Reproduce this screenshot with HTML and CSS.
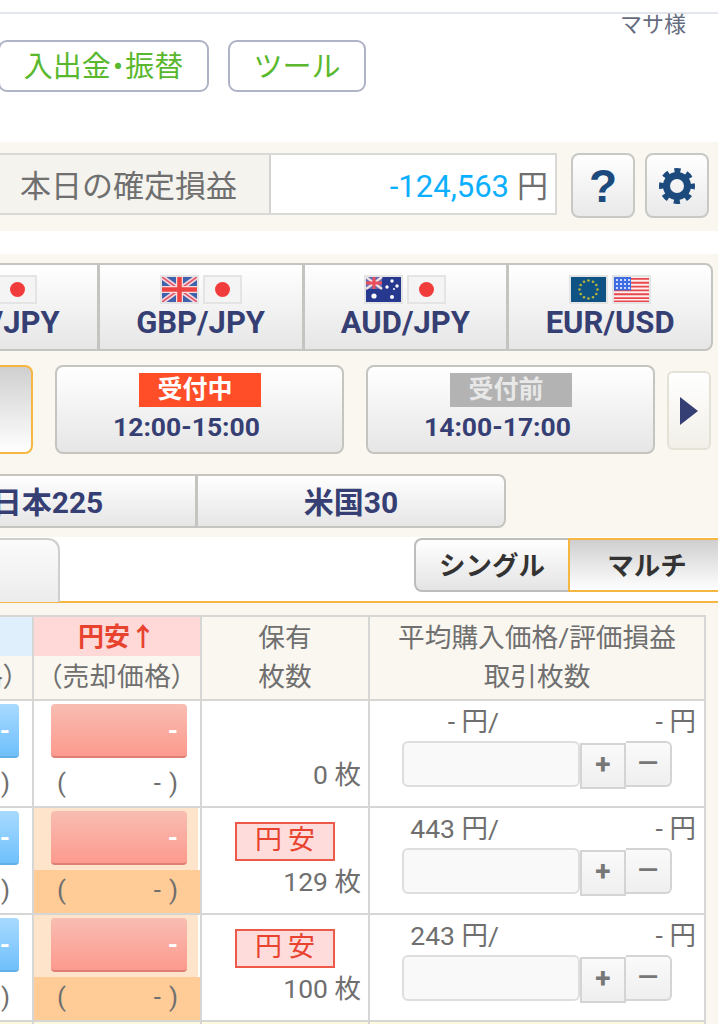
FILE: index.html
```html
<!DOCTYPE html>
<html lang="ja">
<head>
<meta charset="utf-8">
<title>取引</title>
<link rel="stylesheet" href="styles.css">
</head>
<body>
<svg class="defs" width="0" height="0" aria-hidden="true">
  <defs>
    <symbol id="f-jp" viewBox="0 0 35 25"><rect width="35" height="25" fill="#f4f4f4"/><circle cx="17.5" cy="12.5" r="7.5" fill="#f13c3c"/></symbol>
    <symbol id="f-gb" viewBox="0 0 35 25"><rect width="35" height="25" fill="#3f62ad"/><path d="M0 0L35 25M35 0L0 25" stroke="#f4d6da" stroke-width="5"/><path d="M0 0L35 25M35 0L0 25" stroke="#e2556a" stroke-width="1.6"/><path d="M17.5 0V25M0 12.5H35" stroke="#f6dcdc" stroke-width="7"/><path d="M17.5 0V25M0 12.5H35" stroke="#ef4343" stroke-width="4.5"/></symbol>
    <symbol id="f-au" viewBox="0 0 35 25"><rect width="35" height="25" fill="#26398f"/><rect width="16" height="12" fill="#5b6cb4"/><path d="M0 0L16 12M16 0L0 12" stroke="#f2dce0" stroke-width="2.4"/><path d="M8 0V12M0 6H16" stroke="#ea4e5c" stroke-width="3"/><g fill="#fff"><circle cx="8" cy="19" r="2.6"/><circle cx="26" cy="4" r="1.7"/><circle cx="21" cy="10" r="1.7"/><circle cx="31" cy="9" r="1.7"/><circle cx="26" cy="20" r="2"/><circle cx="28" cy="12" r="1"/></g></symbol>
    <symbol id="f-eu" viewBox="0 0 35 25"><rect width="35" height="25" fill="#0f5384"/><g fill="#b5b53a"><circle cx="17.5" cy="3.5" r="1.3"/><circle cx="22" cy="4.7" r="1.3"/><circle cx="25.3" cy="8" r="1.3"/><circle cx="26.5" cy="12.5" r="1.3"/><circle cx="25.3" cy="17" r="1.3"/><circle cx="22" cy="20.3" r="1.3"/><circle cx="17.5" cy="21.5" r="1.3"/><circle cx="13" cy="20.3" r="1.3"/><circle cx="9.7" cy="17" r="1.3"/><circle cx="8.5" cy="12.5" r="1.3"/><circle cx="9.7" cy="8" r="1.3"/><circle cx="13" cy="4.7" r="1.3"/></g></symbol>
    <symbol id="f-us" viewBox="0 0 35 25"><rect width="35" height="25" fill="#fbeeee"/><path d="M0 1.9H35M0 5.8H35M0 9.6H35M0 13.4H35M0 17.3H35M0 21.1H35M0 24.5H35" stroke="#e8484c" stroke-width="1.9"/><rect width="17" height="13.4" fill="#3f6ce0"/><g fill="#fff"><circle cx="3" cy="3" r="1"/><circle cx="7" cy="3" r="1"/><circle cx="11" cy="3" r="1"/><circle cx="15" cy="3" r="1"/><circle cx="3" cy="7" r="1"/><circle cx="7" cy="7" r="1"/><circle cx="11" cy="7" r="1"/><circle cx="15" cy="7" r="1"/><circle cx="3" cy="11" r="1"/><circle cx="7" cy="11" r="1"/><circle cx="11" cy="11" r="1"/><circle cx="15" cy="11" r="1"/></g></symbol>
  </defs>
</svg>

<div class="page">
  <header class="head">
    <div class="account">マサ様</div>
    <nav class="nav">
      <a class="nav-btn nav-btn-wide">入出金<span class="dot">・</span>振替</a>
      <a class="nav-btn nav-btn-tool">ツール</a>
    </nav>
  </header>

  <section class="summary">
    <div class="pl">
      <div class="pl-label">本日の確定損益</div>
      <div class="pl-value"><span class="minus">-124,563</span><span class="yen">円</span></div>
    </div>
    <button class="icon-btn help">?</button>
    <button class="icon-btn">
      <svg width="36" height="36" viewBox="0 0 36 36"><circle cx="18" cy="18" r="10.5" fill="none" stroke="#1c4a7d" stroke-width="7"/><circle cx="18" cy="18" r="15" fill="none" stroke="#1c4a7d" stroke-width="6" stroke-dasharray="6 5.78" stroke-dashoffset="3"/></svg>
    </button>
  </section>

  <section class="market">
    <div class="pairs">
      <div class="pair"><div class="flags"><svg class="flag"><use href="#f-us"/></svg><svg class="flag"><use href="#f-jp"/></svg></div><div class="pair-name">USD/JPY</div></div>
      <div class="pair"><div class="flags"><svg class="flag"><use href="#f-gb"/></svg><svg class="flag"><use href="#f-jp"/></svg></div><div class="pair-name">GBP/JPY</div></div>
      <div class="pair"><div class="flags"><svg class="flag"><use href="#f-au"/></svg><svg class="flag"><use href="#f-jp"/></svg></div><div class="pair-name">AUD/JPY</div></div>
      <div class="pair"><div class="flags"><svg class="flag"><use href="#f-eu"/></svg><svg class="flag"><use href="#f-us"/></svg></div><div class="pair-name">EUR/USD</div></div>
    </div>
    <div class="sessions">
      <div class="session session-active"></div>
      <div class="session"><div class="badge badge-open">受付中</div><div class="time">12:00-15:00</div></div>
      <div class="session"><div class="badge badge-wait">受付前</div><div class="time">14:00-17:00</div></div>
      <div class="next"><span class="tri"></span></div>
    </div>
    <div class="indexes">
      <div class="index index-a">日本225</div>
      <div class="index index-b">米国30</div>
    </div>
  </section>

  <section class="tabs">
    <div class="tab-left"></div>
    <div class="mode mode-single">シングル</div>
    <div class="mode mode-multi">マルチ</div>
  </section>

  <section class="board">
    <div class="grid">
      <div class="hcell hcell-side"><div class="side side-buy">円高↓</div><div class="sub">（購入価格）</div></div>
      <div class="hcell hcell-side"><div class="side side-sell">円安↑</div><div class="sub">（売却価格）</div></div>
      <div class="hcell hcell-text"><div>保有</div><div>枚数</div></div>
      <div class="hcell hcell-text hcell-end"><div>平均購入価格/評価損益</div><div>取引枚数</div></div>

      <div class="cell price"><div class="price-top"><div class="quote quote-buy">-</div></div><div class="range"><span>(</span><span class="range-r">-<i>)</i></span></div></div>
      <div class="cell price"><div class="price-top"><div class="quote quote-sell">-</div></div><div class="range"><span>(</span><span class="range-r">-<i>)</i></span></div></div>
      <div class="cell held"><div class="count">0 枚</div></div>
      <div class="cell trade cell-end"><div class="vals"><span class="avg">- 円/</span><span class="pnl">- 円</span></div><div class="ctrl"><div class="qty"></div><div class="step step-plus">+</div><div class="step step-minus">—</div></div></div>

      <div class="cell price"><div class="price-top"><div class="quote quote-buy">-</div></div><div class="range"><span>(</span><span class="range-r">-<i>)</i></span></div></div>
      <div class="cell price price-hit"><div class="price-top"><div class="quote quote-sell">-</div></div><div class="range"><span>(</span><span class="range-r">-<i>)</i></span></div></div>
      <div class="cell held"><div class="tag">円安</div><div class="count">129 枚</div></div>
      <div class="cell trade cell-end"><div class="vals"><span class="avg">443 円/</span><span class="pnl">- 円</span></div><div class="ctrl"><div class="qty"></div><div class="step step-plus">+</div><div class="step step-minus">—</div></div></div>

      <div class="cell price"><div class="price-top"><div class="quote quote-buy">-</div></div><div class="range"><span>(</span><span class="range-r">-<i>)</i></span></div></div>
      <div class="cell price price-hit"><div class="price-top"><div class="quote quote-sell">-</div></div><div class="range"><span>(</span><span class="range-r">-<i>)</i></span></div></div>
      <div class="cell held"><div class="tag">円安</div><div class="count">100 枚</div></div>
      <div class="cell trade cell-end"><div class="vals"><span class="avg">243 円/</span><span class="pnl">- 円</span></div><div class="ctrl"><div class="qty"></div><div class="step step-plus">+</div><div class="step step-minus">—</div></div></div>

      <div class="cell cell-next"></div>
      <div class="cell cell-next"></div>
      <div class="cell cell-next"></div>
      <div class="cell cell-next cell-end"></div>
    </div>
  </section>
</div>
</body>
</html>
```

FILE: styles.css
```css
* { box-sizing: border-box; }
html, body { margin: 0; padding: 0; background: #fff; }
body {
  font-family: Roboto, "Noto Sans CJK JP", sans-serif;
  color: #6f6f6f;
}
.defs { position: absolute; }
.page { width: 718px; height: 1024px; overflow: hidden; }

/* header */
.head { height: 142px; padding-top: 12px; }
.account {
  height: 28px;
  border-top: 2px solid #e4e6ee;
  padding-right: 32px;
  text-align: right;
  font-size: 22px;
  line-height: 22px;
  color: #666c80;
}
.nav { display: flex; gap: 19px; margin-left: -2px; }
.nav-btn {
  display: flex;
  flex: none;
  align-items: center;
  justify-content: center;
  height: 52px;
  padding-bottom: 5px;
  border: 2px solid #aeb3c6;
  border-radius: 9px;
  background: #fff;
  color: #5ab82e;
  font-size: 29px;
}
.nav-btn-wide { width: 211px; }
.nav-btn-tool { width: 138px; }
.dot { font-feature-settings: "palt"; }

/* summary */
.summary {
  display: flex;
  align-items: flex-start;
  height: 89px;
  padding-top: 11px;
  background: #faf7f0;
}
.pl {
  display: flex;
  flex: none;
  width: 567px;
  height: 62px;
  margin-left: -10px;
  border: 2px solid #d9d9d5;
  background: #fff;
}
.pl-label {
  width: 279px;
  padding-left: 28px;
  background: #f4f3ee;
  border-right: 2px solid #d2d2d0;
  font-size: 31px;
  line-height: 64px;
  white-space: nowrap;
}
.pl-value {
  flex: 1;
  display: flex;
  justify-content: flex-end;
  gap: 8px;
  padding-right: 7px;
  font-size: 31px;
  line-height: 64px;
}
.minus { color: #0ab0ff; }
.icon-btn {
  display: flex;
  flex: none;
  align-items: center;
  justify-content: center;
  width: 64px;
  height: 65px;
  padding: 0;
  margin-left: 14px;
  border: 2px solid #c8c8c4;
  border-radius: 8px;
  background: linear-gradient(#fff, #e9e9e9);
  color: #1c4a7d;
}
.icon-btn + .icon-btn { margin-left: 10px; }
.help {
  font-family: "Liberation Sans", sans-serif;
  font-weight: 700;
  font-size: 46px;
  line-height: 1;
}

/* market */
.market {
  height: 283px;
  margin-top: 23px;
  padding-top: 9px;
  background: #faf7f0;
}
.pairs {
  display: flex;
  width: 820px;
  height: 88px;
  margin-left: -107px;
  border: 2px solid #c4c4c0;
  border-radius: 0 8px 8px 0;
  background: linear-gradient(#fff, #e6e6e6);
}
.pair {
  flex: 1;
  display: flex;
  flex-direction: column;
  align-items: center;
  padding-top: 10px;
  border-right: 3px solid #c4c4c0;
  color: #363f73;
}
.pair:last-child { border-right: 0; }
.flags { display: flex; gap: 4px; height: 29px; }
.flag {
  width: 39px;
  height: 29px;
  padding: 2px;
  background: #e4e4e4;
}
.pair-name {
  font-size: 31px;
  font-weight: 700;
  line-height: 38px;
  white-space: nowrap;
}
.sessions {
  display: flex;
  align-items: flex-start;
  gap: 22px;
  width: 974px;
  margin-top: 14px;
  margin-left: -256px;
}
.session {
  display: flex;
  flex: none;
  flex-direction: column;
  align-items: center;
  width: 289px;
  height: 89px;
  padding-top: 6px;
  border: 2px solid #c4c4c0;
  border-radius: 8px;
  background: linear-gradient(#fff, #e6e6e6);
}
.session-active {
  border-color: #f5b642;
  background: linear-gradient(#cfcfcf, #fff);
}
.badge {
  width: 122px;
  height: 34px;
  padding-right: 9px;
  color: #fff;
  font-size: 25px;
  font-weight: 700;
  line-height: 34px;
  text-align: center;
}
.badge-open { background: #ff4e28; }
.badge-wait { background: #b3b3b3; color: #e8e8e8; }
.time {
  margin-top: 2px;
  padding-right: 26px;
  color: #363f73;
  font-size: 26.5px;
  font-weight: 700;
  line-height: 36px;
}
.next {
  display: flex;
  flex: none;
  align-items: center;
  justify-content: center;
  width: 44px;
  height: 79px;
  margin: 6px 0 0 -10px;
  border: 2px solid #e4e1d6;
  border-radius: 6px;
  background: linear-gradient(#fff, #f1efe8);
}
.tri {
  width: 0;
  height: 0;
  border-left: 18px solid #363f73;
  border-top: 14px solid transparent;
  border-bottom: 14px solid transparent;
}
.indexes {
  display: flex;
  width: 608px;
  height: 54px;
  margin: 20px 0 0 -102px;
  border: 2px solid #c4c4c0;
  border-radius: 0 8px 8px 0;
  background: linear-gradient(#fff, #e6e6e6);
  color: #363f73;
  font-size: 30px;
  font-weight: 700;
  line-height: 54px;
  text-align: center;
}
.index-a { width: 298px; border-right: 3px solid #c4c4c0; }
.index-b { flex: 1; }

/* tabs */
.tabs {
  display: flex;
  align-items: flex-start;
  height: 66px;
  padding-top: 1px;
  border-bottom: 2px solid #f5b642;
}
.tab-left {
  flex: none;
  width: 200px;
  height: 64px;
  margin-left: -140px;
  border: 2px solid #cfcfcf;
  border-bottom: 0;
  border-radius: 0 12px 0 0;
  background: linear-gradient(#fbfbfb, #ececec);
}
.mode {
  flex: none;
  height: 54px;
  color: #333;
  font-size: 26.5px;
  font-weight: 700;
  line-height: 52px;
  text-align: center;
  white-space: nowrap;
}
.mode-single {
  width: 154px;
  margin-left: 354px;
  border: 2px solid #bdbdbd;
  border-right: 0;
  border-radius: 8px 0 0 8px;
  background: linear-gradient(#fff, #e4e4e4);
}
.mode-multi {
  width: 158px;
  border: 2px solid #f5b642;
  background: linear-gradient(#cfcfcf, #fff);
}

/* board */
.board {
  height: 421px;
  padding-top: 12px;
  background: #faf7f0;
}
.grid {
  display: grid;
  grid-template-columns: 168px 168px 168px 336px;
  grid-template-rows: 84px 107px 107px 107px 30px;
  width: 840px;
  margin-left: -134px;
  border-top: 2px solid #d6d6d4;
}
.hcell {
  border-right: 2px solid #d6d6d4;
  border-bottom: 2px solid #d6d6d4;
  font-size: 26.7px;
  text-align: center;
  white-space: nowrap;
}
.hcell-text { line-height: 39px; padding-top: 2px; }
.side { height: 39px; font-size: 26px; font-weight: 700; line-height: 40px; }
.side-buy { background: #dff0fc; color: #2d8fe0; }
.side-sell { background: #ffd9d7; color: #e8432f; }
.sub { line-height: 43px; font-feature-settings: "palt"; letter-spacing: 0.6px; }
.cell {
  background: #fff;
  border-right: 2px solid #d6d6d4;
  border-bottom: 2px solid #d6d6d4;
}
.price { display: flex; flex-direction: column; }
.price-top { padding: 3px 13px 5px 17px; }
.quote {
  height: 54px;
  padding-right: 9px;
  border-radius: 4px;
  color: #fff;
  font-size: 26px;
  font-weight: 700;
  line-height: 54px;
  text-align: right;
}
.quote-buy { background: linear-gradient(#a8daff, #6fc0fb); border-bottom: 2px solid #62aee6; }
.quote-sell { background: linear-gradient(#f8bdb2, #fd9a8e); border-bottom: 2px solid #dc8076; }
.range {
  flex: 1;
  display: flex;
  justify-content: space-between;
  padding: 0 22px 0 23px;
  font-size: 26px;
  line-height: 40px;
}
.range-r i { margin-left: 8px; font-style: normal; }
.price-hit .price-top { background: #ffe4cc; margin-right: 2px; padding-right: 11px; }
.price-hit .range { background: #ffcb96; }
.held {
  display: flex;
  flex-direction: column;
  align-items: flex-end;
  justify-content: flex-end;
  padding: 0 7px 13px 0;
}
.tag {
  width: 100px;
  height: 39px;
  margin: 0 26px 3px 0;
  border: 2px solid #ee5a4a;
  background: #ffdcdc;
  color: #e8432f;
  font-size: 27px;
  line-height: 33px;
  letter-spacing: 6px;
  text-indent: 6px;
  text-align: center;
}
.count { font-size: 26.5px; line-height: 36px; white-space: nowrap; }
.trade { padding-top: 6px; }
.vals {
  display: flex;
  justify-content: space-between;
  width: 326px;
  font-size: 26.5px;
  line-height: 30px;
  white-space: nowrap;
}
.avg { width: 129px; text-align: right; }
.ctrl { display: flex; align-items: flex-start; margin: 4px 0 0 32px; }
.qty {
  width: 178px;
  height: 46px;
  border: 2px solid #dedede;
  border-radius: 6px;
  background: #f9f9f9;
}
.step {
  width: 46px;
  height: 46px;
  border: 2px solid #d4d4d4;
  background: linear-gradient(#fafafa, #efefef);
  color: #777;
  text-align: center;
}
.step-plus { margin-top: 2px; font-size: 28px; font-weight: 700; line-height: 40px; }
.step-minus {
  border-left: 0;
  border-radius: 0 6px 6px 0;
  font-size: 27px;
  line-height: 40px;
  font-weight: 500;
}
.cell-next { background: #fdf9dc; }
```
